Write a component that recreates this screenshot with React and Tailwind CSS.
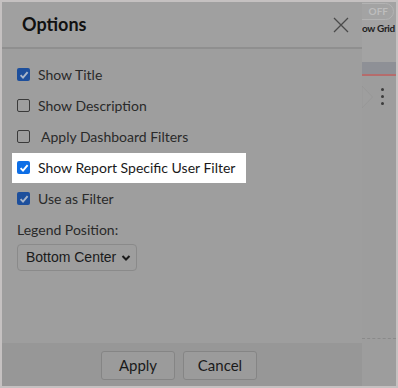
import React from 'react'

const lato = { fontFamily: 'Lato, "Open Sans", sans-serif' }

/** Small checkbox drawn to match the dimmed look of the screenshot */
const Box = ({ checked, bright = false }) => {
  if (!checked) {
    return <span className="w-[13px] h-[13px] rounded-[2px] border border-[#3a3a3a] shrink-0" />
  }
  return (
    <span
      className={`w-[13px] h-[13px] rounded-[2px] shrink-0 flex items-center justify-center ${
        bright ? 'bg-[#0d6ee6]' : 'bg-[#1d4f9c]'
      }`}
    >
      <svg width="10" height="10" viewBox="0 0 10 10">
        <path d="M1.6 5.2 L4 7.6 L8.6 2.2" fill="none" stroke={bright ? '#ffffff' : '#a9b6c9'} strokeWidth="1.9" />
      </svg>
    </span>
  )
}

const Row = ({ label, checked, extra = false }) => (
  <div className="h-[31px] flex items-center">
    <Box checked={checked} />
    <span className={`${extra ? 'ml-[11px]' : 'ml-[8px]'} text-[14px] text-[#2a2a2a]`}>{label}</span>
  </div>
)

export default function App() {
  return (
    <div className="w-[398px] h-[388px] border-2 border-[#c5c1c1] bg-[#9b9b9b] flex overflow-hidden" style={lato}>
      {/* Options dialog */}
      <div className="relative z-10 w-[360px] h-full flex flex-col bg-[#9e9e9e]">
        <div className="h-[45px] shrink-0 flex items-center justify-between pl-[20px] pr-[12px] bg-[#a0a0a0]">
          <h2 className="text-[18px] font-bold text-[#111111] mt-[-1px]">Options</h2>
          <svg width="18" height="18" viewBox="0 0 18 18">
            <path d="M2 2 L16 16 M16 2 L2 16" stroke="#4a4a4a" strokeWidth="1.3" />
          </svg>
        </div>
        <div className="h-[2px] shrink-0 bg-[#8f8f8f]" />

        <div className="flex-1 pl-[15px] pt-[10px]">
          <Row label="Show Title" checked />
          <Row label="Show Description" />
          <Row label="Apply Dashboard Filters" extra />
          <div className="h-[31px] flex items-center">
            <div className="ml-[-5px] w-[234px] h-[30px] bg-white flex items-center pl-[5px]">
              <Box checked bright />
              <span className="ml-[8px] text-[14px] text-[#1a1a1a]">Show Report Specific User Filter</span>
            </div>
          </div>
          <Row label="Use as Filter" checked />
          <div className="h-[30px] flex items-center text-[14px] text-[#2a2a2a]">Legend Position:</div>
          <div
            className="w-[120px] h-[27px] border border-[#8a8a8a] rounded-[4px] flex items-center justify-between pl-[8px] pr-[5px] text-[14px] text-[#1a1a1a]"
            style={{ fontFamily: '"Liberation Sans", Arial, sans-serif' }}
          >
            <span>Bottom Center</span>
            <svg width="10" height="8" viewBox="0 0 10 8">
              <path d="M1.5 2 L5 5.5 L8.5 2" fill="none" stroke="#1a1a1a" strokeWidth="2" />
            </svg>
          </div>
        </div>

        <div className="h-[43px] shrink-0 bg-[#979797] flex items-center gap-[8px] pl-[99px] pt-[1px]">
          <button className="w-[74px] h-[29px] rounded-[3px] border border-[#858585] bg-[#9b9b9b] text-[15px] text-[#1a1a1a]">
            Apply
          </button>
          <button className="w-[74px] h-[29px] rounded-[3px] border border-[#858585] bg-[#9b9b9b] text-[15px] text-[#1a1a1a]">
            Cancel
          </button>
        </div>

        {/* pointer */}
        <svg className="absolute left-[360px] top-[84px]" width="11" height="22" viewBox="0 0 11 22">
          <polygon points="0,0 10.5,11 0,22" fill="#9e9e9e" stroke="#939393" strokeWidth="0.6" />
        </svg>
      </div>

      {/* page behind the dialog */}
      <div className="flex-1 flex flex-col">
        <div className="h-[60px] bg-[#a3a3a3] relative">
          <div className="absolute left-[-14px] top-[1px] w-[46px] h-[17px] rounded-full border border-[#b3b3b3] flex items-center justify-end pr-[5px]">
            <span className="text-[10px] font-bold text-[#bdbdbd]">OFF</span>
          </div>
          <div className="absolute left-0 top-[19px] text-[10px] font-bold text-[#1e1e1e] whitespace-nowrap tracking-[-0.3px]">
            ow Grid
          </div>
        </div>
        <div className="h-[12px] bg-[#8e9096]" />
        <div className="h-[2px] bg-[#b56c6c]" />
        <div className="flex-1 bg-[#9d9d9d] relative">
          <div className="flex flex-col gap-[4px] items-center w-[3px] ml-[19px] mt-[12px]">
            <span className="w-[3px] h-[3px] rounded-full bg-[#3c3c3c]" />
            <span className="w-[3px] h-[3px] rounded-full bg-[#3c3c3c]" />
            <span className="w-[3px] h-[3px] rounded-full bg-[#3c3c3c]" />
          </div>
          <div className="absolute left-0 right-0 top-[262px] border-t border-dashed border-[#8a8a8a]" />
        </div>
      </div>
    </div>
  )
}
